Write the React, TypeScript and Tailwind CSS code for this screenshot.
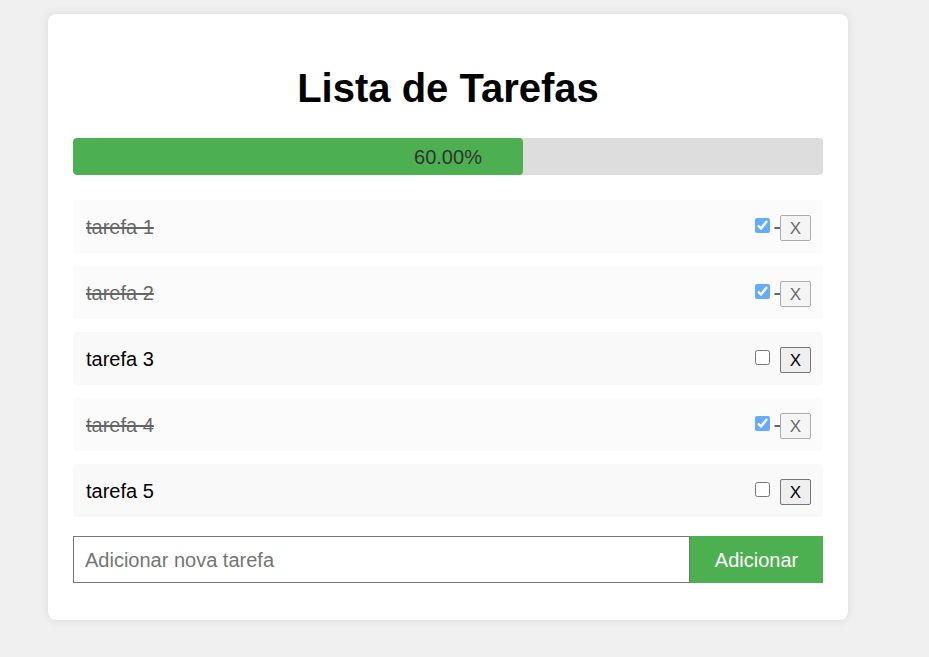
import {useState} from 'react';

type Task = {id: number; text: string; done: boolean};

const initialTasks: Task[] = [
  {id: 1, text: 'tarefa 1', done: true},
  {id: 2, text: 'tarefa 2', done: true},
  {id: 3, text: 'tarefa 3', done: false},
  {id: 4, text: 'tarefa 4', done: true},
  {id: 5, text: 'tarefa 5', done: false},
];

function TaskRow({task, onToggle, onRemove}: {task: Task; onToggle: () => void; onRemove: () => void}) {
  return (
    <li
      className={`flex h-[53px] items-center justify-between rounded bg-[#f9f9f9] pr-[12px] pl-[13px] ${
        task.done ? 'line-through opacity-60' : ''
      }`}
    >
      <span>{task.text}</span>
      <span className="whitespace-pre">
        <input
          type="checkbox"
          checked={task.done}
          onChange={onToggle}
          className="my-0 mr-[4px] ml-0 h-[15px] w-[15px] align-[1px]"
        />{' '}
        <button
          onClick={onRemove}
          className="inline-block h-[26px] w-[31px] rounded-[2px] border border-[#767676] bg-[#efefef] text-[17px] leading-none text-black"
        >
          X
        </button>
      </span>
    </li>
  );
}

export default function App() {
  const [tasks, setTasks] = useState<Task[]>(initialTasks);
  const [draft, setDraft] = useState('');

  const done = tasks.filter((t) => t.done).length;
  const pct = tasks.length ? (done / tasks.length) * 100 : 0;

  const add = () => {
    if (!draft.trim()) return;
    setTasks([...tasks, {id: Date.now(), text: draft.trim(), done: false}]);
    setDraft('');
  };

  return (
    <div className="min-h-[657px] bg-[#f0f0f0] pt-[14px] font-['Liberation_Sans',Arial,sans-serif] text-[20px] text-black">
      <div className="ml-[48px] w-[800px] rounded-lg bg-white px-[25px] pt-[25px] pb-[37px] shadow-[0_0_10px_rgba(0,0,0,0.1)]">
        <h1 className="mt-[26px] mb-[27px] text-center text-[40px] leading-[46px] font-bold">Lista de Tarefas</h1>

        <div className="relative h-[37px] overflow-hidden rounded bg-[#ddd]">
          <div className="h-full rounded bg-[#4caf50]" style={{width: `${pct}%`}} />
          <span className="absolute inset-0 flex items-center justify-center text-[#333]">{pct.toFixed(2)}%</span>
        </div>

        <ul className="mt-[25px] flex flex-col gap-[13px]">
          {tasks.map((t) => (
            <TaskRow
              key={t.id}
              task={t}
              onToggle={() => setTasks(tasks.map((x) => (x.id === t.id ? {...x, done: !x.done} : x)))}
              onRemove={() => setTasks(tasks.filter((x) => x.id !== t.id))}
            />
          ))}
        </ul>

        <div className="mt-[19px] flex h-[47px]">
          <input
            value={draft}
            onChange={(e) => setDraft(e.target.value)}
            placeholder="Adicionar nova tarefa"
            className="min-w-0 flex-1 border border-[#767676] px-[11px] outline-none placeholder:text-[#757575]"
          />
          <button onClick={add} className="w-[133px] bg-[#4caf50] text-white">
            Adicionar
          </button>
        </div>
      </div>
    </div>
  );
}
